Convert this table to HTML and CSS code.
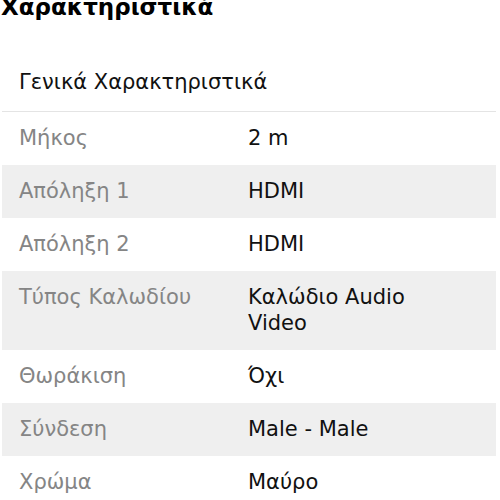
FILE: index.html
```html
<!DOCTYPE html>
<html lang="el">
<head>
<meta charset="utf-8">
<link rel="stylesheet" href="styles.css">
</head>
<body>
<h2 class="title">Χαρακτηριστικά</h2>
<section class="specs">
  <h3 class="group">Γενικά Χαρακτηριστικά</h3>
  <div class="row"><div class="label">Μήκος</div><div class="value">2 m</div></div>
  <div class="row alt"><div class="label">Απόληξη 1</div><div class="value">HDMI</div></div>
  <div class="row"><div class="label">Απόληξη 2</div><div class="value">HDMI</div></div>
  <div class="row alt"><div class="label">Τύπος Καλωδίου</div><div class="value">Καλώδιο Audio Video</div></div>
  <div class="row"><div class="label">Θωράκιση</div><div class="value">Όχι</div></div>
  <div class="row alt"><div class="label">Σύνδεση</div><div class="value">Male - Male</div></div>
  <div class="row"><div class="label">Χρώμα</div><div class="value">Μαύρο</div></div>
</section>
</body>
</html>
```
FILE: styles.css
```css
html, body {
  margin: 0;
  padding: 0;
  background: #fff;
  overflow: hidden;
}
body {
  font-family: "DejaVu Sans", "Noto Sans", sans-serif;
  color: #111;
}
.title {
  margin: -8px 0 0 1px;
  font-size: 23px;
  line-height: 30px;
  font-weight: 700;
  color: #000;
}
.specs {
  margin: 0 4px 0 2px;
}
.group {
  margin: 0;
  padding: 47px 17px 16px;
  font-size: 21px;
  line-height: 26px;
  font-weight: 400;
  color: #111;
  border-bottom: 1px solid #e4e4e4;
}
.row {
  display: grid;
  grid-template-columns: 229px 1fr;
  padding: 13px 0 14px;
  font-size: 21px;
  line-height: 26px;
}
.row.alt {
  background: #efefef;
}
.label {
  padding-left: 17px;
  color: #858585;
}
.value {
  padding-left: 17px;
  max-width: 200px;
  color: #111;
}
```
